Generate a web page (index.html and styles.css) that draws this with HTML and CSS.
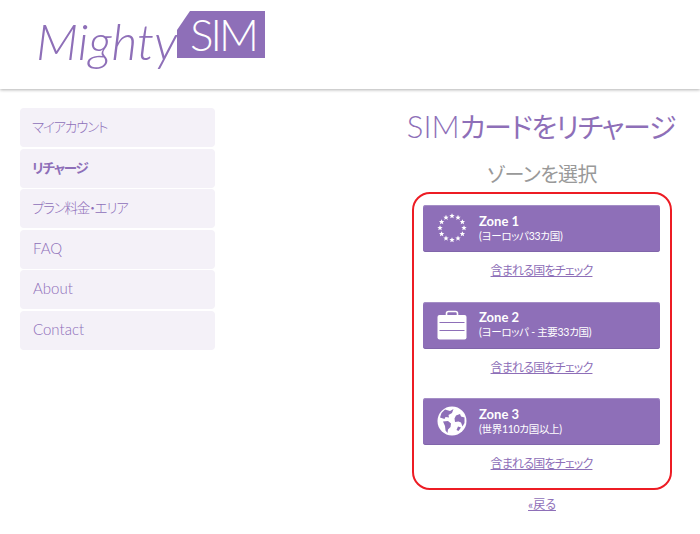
FILE: index.html
```html
<!DOCTYPE html>
<html lang="ja">

<head>
    <meta charset="UTF-8">
    <title>MightySIM</title>
    <link rel="stylesheet" href="styles.css">
</head>

<body>
    <header class="site-header">
        <div class="logo">
            <span class="logo-name">Mighty</span>
            <span class="logo-sim">SIM</span>
        </div>
    </header>

    <div class="page">
        <nav class="side-nav">
            <a class="nav-item" href="#">マイアカウント</a>
            <a class="nav-item active" href="#">リチャージ</a>
            <a class="nav-item" href="#">プラン料金・エリア</a>
            <a class="nav-item latin" href="#">FAQ</a>
            <a class="nav-item latin" href="#">About</a>
            <a class="nav-item latin" href="#">Contact</a>
        </nav>

        <main class="content">
            <h1 class="page-title"><span class="thin">SIM</span>カードをリチャージ</h1>
            <h2 class="sub-title">ゾーンを選択</h2>

            <div class="zone-box">
                <a class="zone-btn" href="#">
                    <svg class="zone-icon" width="30" height="30" viewBox="-15 -15 30 30" fill="#fff">
                        <defs>
                            <polygon id="star" points="0,-2.8 0.8,-0.9 2.7,-0.9 1.2,0.3 1.7,2.3 0,1.2 -1.7,2.3 -1.2,0.3 -2.7,-0.9 -0.8,-0.9" />
                        </defs>
                        <use href="#star" transform="rotate(0) translate(0,-12) rotate(0)" />
                        <use href="#star" transform="rotate(30) translate(0,-12) rotate(-30)" />
                        <use href="#star" transform="rotate(60) translate(0,-12) rotate(-60)" />
                        <use href="#star" transform="rotate(90) translate(0,-12) rotate(-90)" />
                        <use href="#star" transform="rotate(120) translate(0,-12) rotate(-120)" />
                        <use href="#star" transform="rotate(150) translate(0,-12) rotate(-150)" />
                        <use href="#star" transform="rotate(180) translate(0,-12) rotate(-180)" />
                        <use href="#star" transform="rotate(210) translate(0,-12) rotate(-210)" />
                        <use href="#star" transform="rotate(240) translate(0,-12) rotate(-240)" />
                        <use href="#star" transform="rotate(270) translate(0,-12) rotate(-270)" />
                        <use href="#star" transform="rotate(300) translate(0,-12) rotate(-300)" />
                        <use href="#star" transform="rotate(330) translate(0,-12) rotate(-330)" />
                    </svg>
                    <span class="zone-text">
                        <span class="zone-name">Zone 1</span>
                        <span class="zone-desc">(ヨーロッパ33カ国)</span>
                    </span>
                </a>
                <a class="check-link" href="#">含まれる国をチェック</a>

                <a class="zone-btn" href="#">
                    <svg class="zone-icon" width="30" height="30" viewBox="0 0 30 30">
                        <path d="M9.5 6V3.5Q9.5 1.5 11.5 1.5H18.500Q20.500 1.500 20.500 3.500V6" fill="none" stroke="#fff" stroke-width="1.600" />
                        <rect x="0.500" y="5" width="29" height="24.500" rx="2" fill="#fff" />
                        <path d="M2.500 12.500H27.500M2.500 20.500H27.500" stroke="#8e6fb8" stroke-width="1.200" />
                    </svg>
                    <span class="zone-text">
                        <span class="zone-name">Zone 2</span>
                        <span class="zone-desc">(ヨーロッパ - 主要33カ国)</span>
                    </span>
                </a>
                <a class="check-link" href="#">含まれる国をチェック</a>

                <a class="zone-btn" href="#">
                    <svg class="zone-icon" width="30" height="30" viewBox="0 0 30 30">
                        <circle cx="15" cy="15" r="14.500" fill="#fff" />
                        <path d="M8 3.500 13 5 16.500 3 15 7 11.500 9 12 11.500 8.500 11 7.500 13 3 11.500 4.500 7Z" fill="#8e6fb8" />
                        <path d="M6 15.500 11 15 14 17.500 13.500 21 11 23.500 10.500 27 8.500 24.500 8 20Z" fill="#8e6fb8" />
                        <path d="M19 9.500 23 8 24 10.500 27.500 11.500 27.500 17 25.500 20.500 24 16.500 21.500 15.500 18 16 17.500 12.500Z" fill="#8e6fb8" />
                        <path d="M21 20.500 24 21.500 21.500 25 19.500 24Z" fill="#8e6fb8" />
                    </svg>
                    <span class="zone-text">
                        <span class="zone-name">Zone 3</span>
                        <span class="zone-desc">(世界110カ国以上)</span>
                    </span>
                </a>
                <a class="check-link" href="#">含まれる国をチェック</a>
            </div>

            <a class="back-link" href="#">«戻る</a>
        </main>
    </div>
</body>

</html>
```

FILE: styles.css
```css
body {
    margin: 0;
    background: #fff;
    font-family: "Lato", "Noto Sans CJK JP", sans-serif;
    font-feature-settings: "palt";
    color: #8e6fb8;
}

a {
    color: #8e6fb8;
}

.site-header {
    height: 89px;
    box-sizing: border-box;
    padding: 11px 0 0 36px;
    box-shadow: 0 1px 3px rgba(0, 0, 0, 0.3);
}

.logo {
    display: flex;
    align-items: flex-start;
    gap: 3px;
}

.logo-name {
    width: 138px;
    font-style: italic;
    font-weight: 300;
    font-size: 50px;
    line-height: 60px;
    white-space: nowrap;
}

.logo-sim {
    width: 88px;
    height: 47px;
    box-sizing: border-box;
    padding-left: 13px;
    background: #8e6fb8;
    clip-path: polygon(13px 0, 100% 0, 100% 100%, 0 100%, 0 19px);
    color: #fff;
    font-weight: 300;
    font-size: 44px;
    line-height: 46px;
    letter-spacing: -3px;
}

.page {
    display: flex;
    justify-content: space-between;
    padding: 19px 28px 0 20px;
}

.side-nav {
    width: 195px;
    display: flex;
    flex-direction: column;
    gap: 1.500px;
}

.nav-item {
    height: 39px;
    box-sizing: border-box;
    padding: 0 0 3px 12px;
    display: flex;
    align-items: center;
    background: #f4f1f8;
    border-radius: 4px;
    font-size: 13.500px;
    font-weight: 300;
    letter-spacing: -1.200px;
    text-decoration: none;
}

.nav-item.active {
    font-weight: 700;
}

.nav-item.latin {
    padding-left: 13px;
    font-size: 15px;
    letter-spacing: 0;
}

.content {
    width: 260px;
    display: flex;
    flex-direction: column;
    align-items: center;
}

.page-title {
    margin: -1px -3px 0 0;
    font-size: 28px;
    line-height: 38px;
    font-weight: 400;
    letter-spacing: -1.300px;
    white-space: nowrap;
    align-self: flex-end;
}

.thin {
    font-size: 31px;
    font-weight: 300;
    letter-spacing: 0;
}

.sub-title {
    margin: 14px 0 0;
    font-size: 20px;
    line-height: 28px;
    font-weight: 400;
    letter-spacing: -0.500px;
    color: #999;
}

.zone-box {
    width: 260px;
    height: 298px;
    box-sizing: border-box;
    margin-top: 4px;
    padding: 11px 10px 0 9px;
    border: 2px solid #ed1c24;
    border-radius: 18px;
    display: flex;
    flex-direction: column;
    align-items: center;
}

.zone-btn {
    width: 100%;
    height: 47px;
    flex-shrink: 0;
    box-sizing: border-box;
    padding: 0 0 1px 14px;
    display: flex;
    align-items: center;
    gap: 12px;
    background: #8e6fb8;
    border-radius: 3px;
    box-shadow: inset 0 1px 0 #a48ec6, inset 0 -1px 0 #8065aa;
    color: #fff;
    text-decoration: none;
}

.zone-icon {
    flex-shrink: 0;
}

.zone-text {
    display: flex;
    flex-direction: column;
}

.zone-name {
    font-size: 13px;
    line-height: 15px;
    font-weight: 700;
}

.zone-desc {
    font-size: 10.500px;
    line-height: 14px;
    letter-spacing: -0.300px;
}

.check-link {
    height: 49.500px;
    flex-shrink: 0;
    padding-top: 10px;
    box-sizing: border-box;
    font-size: 12px;
    line-height: 17px;
    letter-spacing: -0.800px;
}

.back-link {
    margin-top: 6px;
    font-size: 12px;
    line-height: 17px;
}
```
